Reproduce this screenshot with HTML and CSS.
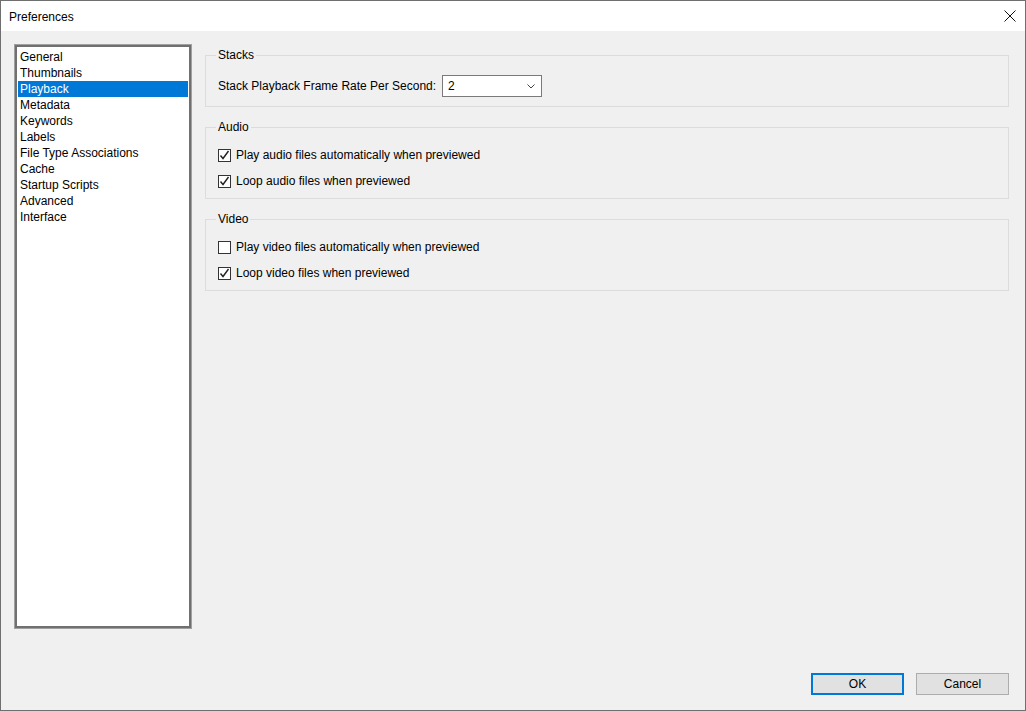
FILE: index.html
```html
<!DOCTYPE html>
<html lang="en">
<head>
    <meta charset="UTF-8">
    <title>Preferences</title>
    <link rel="stylesheet" href="styles.css">
</head>
<body>
    <div class="window">
        <div class="titlebar">
            <span class="title">Preferences</span>
            <svg class="close" width="12" height="12" viewBox="0 0 12 12">
                <path d="M0.5 0.5 L11.5 11.5 M11.5 0.5 L0.5 11.5" stroke="#111" stroke-width="1" fill="none"/>
            </svg>
        </div>

        <div class="client">
            <div class="main">
                <ul class="category-list">
                    <li>General</li>
                    <li>Thumbnails</li>
                    <li class="selected">Playback</li>
                    <li>Metadata</li>
                    <li>Keywords</li>
                    <li>Labels</li>
                    <li>File Type Associations</li>
                    <li>Cache</li>
                    <li>Startup Scripts</li>
                    <li>Advanced</li>
                    <li>Interface</li>
                </ul>

                <div class="pages">
                    <fieldset class="group">
                        <legend>Stacks</legend>
                        <div class="field-row">
                            <label>Stack Playback Frame Rate Per Second:</label>
                            <div class="select">
                                <span>2</span>
                                <svg width="8" height="5" viewBox="0 0 8 5">
                                    <path d="M0.5 0.5 L4 4 L7.5 0.5" stroke="#444" stroke-width="1" fill="none"/>
                                </svg>
                            </div>
                        </div>
                    </fieldset>

                    <fieldset class="group">
                        <legend>Audio</legend>
                        <div class="check-row">
                            <span class="checkbox checked">
                                <svg width="11" height="11" viewBox="0 0 11 11">
                                    <path d="M1.5 5.5 L4 8.5 L9.5 1" stroke="#222" stroke-width="1.4" fill="none"/>
                                </svg>
                            </span>
                            Play audio files automatically when previewed
                        </div>
                        <div class="check-row">
                            <span class="checkbox checked">
                                <svg width="11" height="11" viewBox="0 0 11 11">
                                    <path d="M1.5 5.5 L4 8.5 L9.5 1" stroke="#222" stroke-width="1.4" fill="none"/>
                                </svg>
                            </span>
                            Loop audio files when previewed
                        </div>
                    </fieldset>

                    <fieldset class="group">
                        <legend>Video</legend>
                        <div class="check-row">
                            <span class="checkbox"></span>
                            Play video files automatically when previewed
                        </div>
                        <div class="check-row">
                            <span class="checkbox checked">
                                <svg width="11" height="11" viewBox="0 0 11 11">
                                    <path d="M1.5 5.5 L4 8.5 L9.5 1" stroke="#222" stroke-width="1.4" fill="none"/>
                                </svg>
                            </span>
                            Loop video files when previewed
                        </div>
                    </fieldset>
                </div>
            </div>

            <div class="buttons">
                <button class="btn btn-default">OK</button>
                <button class="btn">Cancel</button>
            </div>
        </div>
    </div>
</body>
</html>
```

FILE: styles.css
```css
body {
    margin: 0;
    font-family: "Liberation Sans", Arial, sans-serif;
    font-size: 12px;
    color: #000;
}

.window {
    width: 1026px;
    height: 711px;
    box-sizing: border-box;
    border: 1px solid #6f6f6f;
    background-color: #f0f0f0;
    display: flex;
    flex-direction: column;
}

.titlebar {
    height: 30px;
    background-color: #fff;
    display: flex;
    align-items: center;
    justify-content: space-between;
    padding: 0 8px 0 8px;
}

.title {
    color: #000;
    padding-top: 1px;
}

.close {
    display: block;
    margin-right: 1px;
}

.client {
    flex: 1;
    display: flex;
    flex-direction: column;
    padding: 13px 16px 15px 13px;
}

.main {
    flex: 1;
    display: flex;
    gap: 13px;
}

.category-list {
    width: 178px;
    box-sizing: border-box;
    margin: 0;
    list-style: none;
    background-color: #fff;
    border: 1px solid #a0a0a0;
    box-shadow: inset 0 0 0 2px #707070;
    padding: 3px 3px 0 3px;
}

.category-list li {
    height: 16px;
    line-height: 16px;
    padding-left: 2px;
    white-space: nowrap;
}

.category-list li:first-child {
    margin-top: 1px;
}

.category-list li.selected {
    background-color: #0078d7;
    color: #fff;
}

.pages {
    flex: 1;
    padding-top: 3px;
}

.group {
    margin: 0 0 12px 0;
    border: 1px solid #dcdcdc;
    padding: 12px 12px 9px 12px;
}

.group legend {
    padding: 0 2px;
    margin-left: -2px;
    line-height: 16px;
}

.field-row {
    display: flex;
    align-items: center;
    gap: 6px;
    height: 22px;
}

.select {
    width: 100px;
    height: 22px;
    box-sizing: border-box;
    border: 1px solid #7a7a7a;
    background-color: #fff;
    display: flex;
    align-items: center;
    justify-content: space-between;
    padding: 0 6px 0 5px;
}

.check-row {
    display: flex;
    align-items: center;
    height: 16px;
    margin-bottom: 10px;
}

.check-row:last-child {
    margin-bottom: 0;
}

.checkbox {
    width: 13px;
    height: 13px;
    box-sizing: border-box;
    border: 1px solid #333;
    background-color: #fff;
    margin-right: 5px;
    display: flex;
    align-items: center;
    justify-content: center;
}

.buttons {
    display: flex;
    justify-content: flex-end;
    gap: 12px;
    margin-top: 44px;
}

.btn {
    width: 93px;
    height: 22px;
    box-sizing: border-box;
    background-color: #e1e1e1;
    border: 1px solid #adadad;
    font-family: "Liberation Sans", Arial, sans-serif;
    font-size: 12px;
    color: #000;
    padding: 0;
}

.btn-default {
    border: 2px solid #0078d7;
}
```
